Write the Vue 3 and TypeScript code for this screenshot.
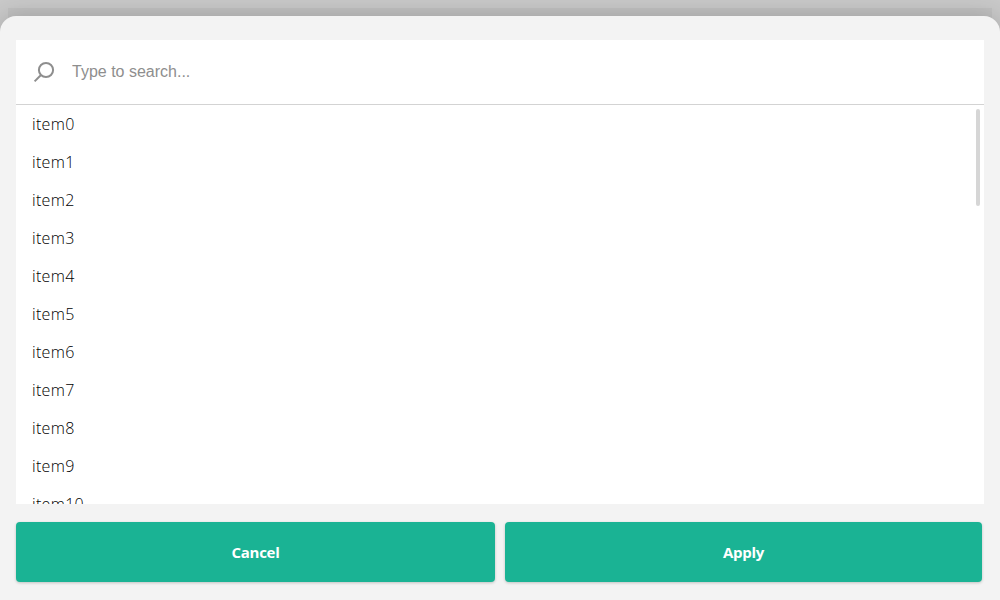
<script setup lang="ts">
import { ref } from 'vue'

const query = ref('')
const items: string[] = Array.from({ length: 11 }, (_, i) => `item${i}`)
</script>

<template>
  <div class="page">
    <div class="field"></div>
    <section class="sheet">
      <div class="panel">
        <label class="search">
          <svg class="icon" width="24" height="24" viewBox="0 0 24 24" fill="none" stroke="#8e8e8e" stroke-width="2">
            <circle cx="14" cy="10" r="7.1" />
            <path d="M9 15L2.6 21.4" />
          </svg>
          <input v-model="query" type="text" placeholder="Type to search..." />
        </label>
        <div class="list">
          <div v-for="item in items" :key="item" class="item">{{ item }}</div>
          <div class="thumb"></div>
        </div>
      </div>
      <div class="actions">
        <button class="cancel" type="button">Cancel</button>
        <button class="apply" type="button">Apply</button>
      </div>
    </section>
  </div>
</template>

<style>
body {
  margin: 0;
  overflow: hidden;
}
</style>

<style scoped>
.page {
  position: relative;
  box-sizing: border-box;
  height: 600px;
  padding-top: 16px;
  overflow: hidden;
  background: #c9c9c9;
  font-family: "Open Sans", sans-serif;
}
.field {
  position: absolute;
  inset: 8px 8px auto;
  height: 40px;
  background: #c1c1c1;
}
.sheet {
  position: relative;
  box-sizing: border-box;
  height: 584px;
  padding: 24px 16px 18px;
  display: flex;
  flex-direction: column;
  gap: 18px;
  border-radius: 16px 16px 0 0;
  background: #f3f3f3;
  box-shadow: 0 0 24px rgba(0, 0, 0, 0.19);
}
.panel {
  height: 464px;
  display: flex;
  flex-direction: column;
  background: #fff;
}
.search {
  box-sizing: border-box;
  height: 65px;
  flex: none;
  display: flex;
  align-items: center;
  gap: 16px;
  padding: 0 16px;
  border-bottom: 1px solid #d3d3d3;
}
.icon {
  flex: none;
}
input {
  flex: 1;
  min-width: 0;
  padding: 0;
  border: 0;
  outline: 0;
  background: transparent;
  font: 16px "Liberation Sans", Arial, sans-serif;
  color: #222;
}
input::placeholder {
  color: #8e8e8e;
  opacity: 1;
}
.list {
  position: relative;
  flex: 1;
  min-height: 0;
  overflow: hidden;
}
.item {
  height: 38px;
  padding: 0 16px;
  line-height: 38px;
  font-size: 16px;
  font-weight: 300;
  letter-spacing: 0.32px;
  color: #000;
}
.thumb {
  position: absolute;
  top: 4px;
  right: 4px;
  width: 4px;
  height: 97px;
  border-radius: 2px;
  background: #d6d6d6;
}
.actions {
  display: flex;
  gap: 10px;
  padding-right: 2px;
}
button {
  height: 60px;
  padding: 0;
  border: 0;
  border-radius: 4px;
  background: #1ab394;
  box-shadow: 0 1px 3px rgba(0, 0, 0, 0.2);
  color: #fff;
  font: 700 15px "Open Sans", sans-serif;
  letter-spacing: -0.25px;
}
.cancel {
  flex: 0 0 479px;
}
.apply {
  flex: 1;
}
</style>
